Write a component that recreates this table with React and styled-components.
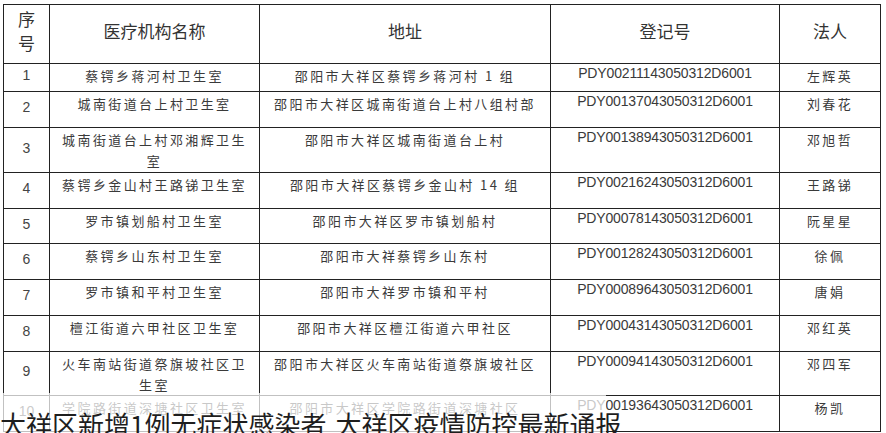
import React from "react";
import styled, { createGlobalStyle } from "styled-components";

const GlobalStyle = createGlobalStyle`
  html, body {
    margin: 0;
    padding: 0;
    background: #ffffff;
    overflow: hidden;
  }
`;

const Page = styled.div`
  position: relative;
  width: 886px;
  height: 433px;
  overflow: hidden;
  padding: 4px 0 0 3px;
  box-sizing: border-box;
  font-family: "Noto Sans CJK SC", sans-serif;
  color: #333;
`;

const Table = styled.table`
  width: 877px;
  border-collapse: collapse;
  table-layout: fixed;
  border: 1px solid #222;
`;

const HeadCell = styled.th`
  border: 1px solid #222;
  font-weight: 400;
  font-size: 17px;
  line-height: 24px;
  color: #333;
  text-align: center;
  vertical-align: middle;
  padding: 0 0 6px;
`;

const Row = styled.tr`
  height: ${(p) => p.$h}px;
`;

const NumCell = styled.td`
  border: 1px solid #222;
  text-align: center;
  vertical-align: middle;
  font-family: "Liberation Sans", sans-serif;
  font-size: 14px;
  color: #444;
  padding: 0 0 5px;
`;

const TextCell = styled.td`
  border: 1px solid #222;
  text-align: center;
  vertical-align: top;
  font-size: 13px;
  letter-spacing: 2.4px;
  line-height: 21px;
  color: #3a3a3a;
  padding: 1px 8px 0;
`;

const CodeCell = styled.td`
  border: 1px solid #222;
  text-align: center;
  vertical-align: top;
  font-family: "Liberation Sans", sans-serif;
  font-size: 14px;
  letter-spacing: -0.15px;
  line-height: 18px;
  color: #3a3a3a;
  padding: 0;
`;

const Caption = styled.div`
  position: absolute;
  left: 0;
  top: 393px;
  width: 606px;
  height: 40px;
  background: rgba(255, 255, 255, 0.72);
  display: flex;
  gap: 9px;
  padding-top: 18px;
  box-sizing: border-box;
  white-space: nowrap;
  font-size: 26px;
  line-height: 26px;
  color: #1e1e1e;
`;

const rows = [
  { n: 1, h: 28, name: "蔡锷乡蒋河村卫生室", addr: "邵阳市大祥区蔡锷乡蒋河村 1 组", code: "PDY00211143050312D6001", person: "左辉英" },
  { n: 2, h: 36, name: "城南街道台上村卫生室", addr: "邵阳市大祥区城南街道台上村八组村部", code: "PDY00137043050312D6001", person: "刘春花" },
  { n: 3, h: 45, name: "城南街道台上村邓湘辉卫生室", addr: "邵阳市大祥区城南街道台上村", code: "PDY00138943050312D6001", person: "邓旭哲" },
  { n: 4, h: 36, name: "蔡锷乡金山村王路锑卫生室", addr: "邵阳市大祥区蔡锷乡金山村 14 组", code: "PDY00216243050312D6001", person: "王路锑" },
  { n: 5, h: 35, name: "罗市镇划船村卫生室", addr: "邵阳市大祥区罗市镇划船村", code: "PDY00078143050312D6001", person: "阮星星" },
  { n: 6, h: 36, name: "蔡锷乡山东村卫生室", addr: "邵阳市大祥蔡锷乡山东村", code: "PDY00128243050312D6001", person: "徐佩" },
  { n: 7, h: 36, name: "罗市镇和平村卫生室", addr: "邵阳市大祥罗市镇和平村", code: "PDY00089643050312D6001", person: "唐娟" },
  { n: 8, h: 36, name: "檀江街道六甲社区卫生室", addr: "邵阳市大祥区檀江街道六甲社区", code: "PDY00043143050312D6001", person: "邓红英" },
  { n: 9, h: 41, name: "火车南站街道祭旗坡社区卫生室", addr: "邵阳市大祥区火车南站街道祭旗坡社区", code: "PDY00094143050312D6001", person: "邓四军" },
  { n: 10, h: 36, name: "学院路街道深塘社区卫生室", addr: "邵阳市大祥区学院路街道深塘社区", code: "PDY00193643050312D6001", person: "杨凯" },
];

export default function App() {
  return (
    <Page>
      <GlobalStyle />
      <Table>
        <colgroup>
          <col style={{ width: 46 }} />
          <col style={{ width: 210 }} />
          <col style={{ width: 291 }} />
          <col style={{ width: 229 }} />
          <col style={{ width: 101 }} />
        </colgroup>
        <thead>
          <Row $h={59}>
            <HeadCell>序<br />号</HeadCell>
            <HeadCell>医疗机构名称</HeadCell>
            <HeadCell>地址</HeadCell>
            <HeadCell>登记号</HeadCell>
            <HeadCell>法人</HeadCell>
          </Row>
        </thead>
        <tbody>
          {rows.map((r) => (
            <Row key={r.n} $h={r.h}>
              <NumCell>{r.n}</NumCell>
              <TextCell>{r.name}</TextCell>
              <TextCell>{r.addr}</TextCell>
              <CodeCell>{r.code}</CodeCell>
              <TextCell>{r.person}</TextCell>
            </Row>
          ))}
        </tbody>
      </Table>
      <Caption>
        <span>大祥区新增1例无症状感染者</span>
        <span>大祥区疫情防控最新通报</span>
      </Caption>
    </Page>
  );
}
